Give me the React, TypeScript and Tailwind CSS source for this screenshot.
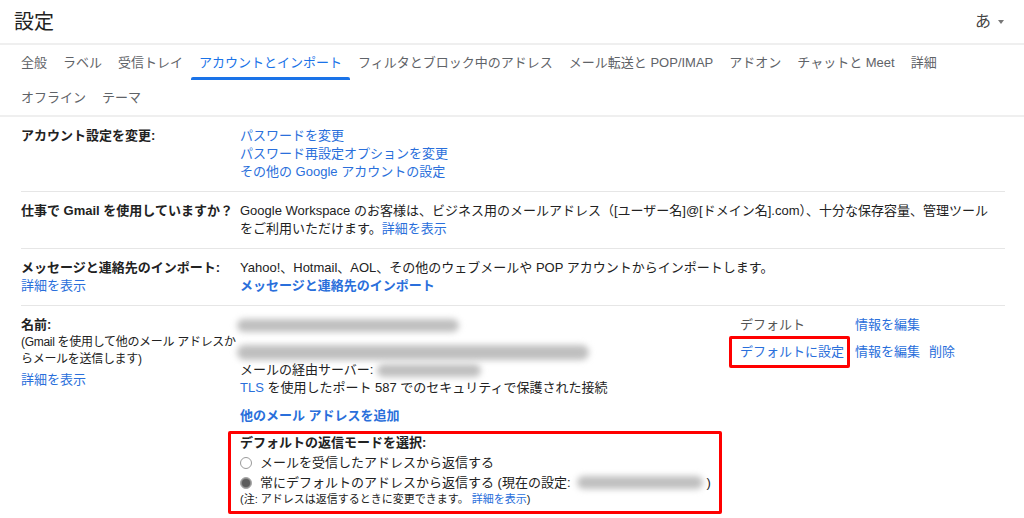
import React from "react";

const tabsTop = ["全般", "ラベル", "受信トレイ", "アカウントとインポート", "フィルタとブロック中のアドレス", "メール転送と POP/IMAP", "アドオン", "チャットと Meet", "詳細"];
const tabsBottom = ["オフライン", "テーマ"];

const Blur = ({ className }: { className: string }) => (
  <span className={`inline-block rounded-full bg-[#bfbfbf] blur-[3px] align-middle ${className}`} />
);

const Tab = ({ label, active }: { label: string; active?: boolean }) => (
  <div className="relative flex h-full items-center px-2">
    <span className={active ? "text-[#1a73e8]" : "text-[#5f6368]"}>{label}</span>
    {active && <span className="absolute bottom-0 left-0 right-0 h-[3px] rounded-t-[2px] bg-[#1a73e8]" />}
  </div>
);

const Link = ({ children, bold }: { children: React.ReactNode; bold?: boolean }) => (
  <a className={`cursor-pointer text-[#2a6fdb] ${bold ? "font-bold" : ""}`}>{children}</a>
);

const Row = ({ label, children }: { label: React.ReactNode; children: React.ReactNode }) => (
  <div className="flex border-b border-[#e6e6e6] py-[10px] leading-[18px]">
    <div className="w-[219px] shrink-0 whitespace-nowrap">{label}</div>
    <div className="flex-1">{children}</div>
  </div>
);

export default function App() {
  return (
    <div className="h-[518px] w-[1024px] overflow-hidden bg-white font-['Liberation_Sans','Noto_Sans_CJK_JP',sans-serif] text-[13px] text-[#222]">
      {/* header */}
      <div className="flex h-[43px] items-center justify-between pl-[14px] pr-[20px]">
        <h1 className="text-[20px] text-[#222]">設定</h1>
        <div className="flex items-center gap-[7px] text-[16px] text-[#444]">
          あ
          <svg width="6" height="4" viewBox="0 0 6 4">
            <path d="M0 0h6L3 4z" fill="#777" />
          </svg>
        </div>
      </div>
      <div className="h-[2px] bg-[#efefef]" />

      {/* tabs */}
      <div className="px-[13px]">
        <div className="flex h-[35px]">
          {tabsTop.map((t) => (
            <Tab key={t} label={t} active={t === "アカウントとインポート"} />
          ))}
        </div>
        <div className="flex h-[35px]">
          {tabsBottom.map((t) => (
            <Tab key={t} label={t} />
          ))}
        </div>
      </div>
      <div className="h-[2px] bg-[#efefef]" />

      {/* settings */}
      <div className="ml-[21px] mr-[19px]">
        <Row label={<span className="font-bold">アカウント設定を変更:</span>}>
          <div><Link>パスワードを変更</Link></div>
          <div><Link>パスワード再設定オプションを変更</Link></div>
          <div><Link>その他の Google アカウントの設定</Link></div>
        </Row>

        <Row label={<span className="font-bold">仕事で Gmail を使用していますか？</span>}>
          Google Workspace のお客様は、ビジネス用のメールアドレス（[ユーザー名]@[ドメイン名].com）、十分な保存容量、管理ツール
          <br />
          をご利用いただけます。<Link>詳細を表示</Link>
        </Row>

        <Row
          label={
            <>
              <div className="font-bold">メッセージと連絡先のインポート:</div>
              <Link>詳細を表示</Link>
            </>
          }
        >
          <div>Yahoo!、Hotmail、AOL、その他のウェブメールや POP アカウントからインポートします。</div>
          <Link bold>メッセージと連絡先のインポート</Link>
        </Row>

        {/* send mail as */}
        <div className="flex pt-[10px] leading-[18px]">
          <div className="w-[219px] shrink-0">
            <div className="font-bold">名前:</div>
            <div className="whitespace-nowrap text-[12px] leading-[17px] tracking-[-0.3px]">
              (Gmail を使用して他のメール アドレスか
              <br />
              らメールを送信します)
            </div>
            <div className="mt-[3px]">
              <Link>詳細を表示</Link>
            </div>
          </div>

          <div className="flex-1">
            <div className="flex h-[27px]">
              <div className="w-[500px] shrink-0">
                <Blur className="-ml-[3px] h-[13px] w-[222px]" />
              </div>
              <div className="w-[115px] shrink-0 text-[#555]">デフォルト</div>
              <div className="w-[74px] shrink-0">
                <Link>情報を編集</Link>
              </div>
            </div>

            <div className="flex">
              <div className="w-[500px] shrink-0">
                <div className="flex h-[18px] items-center">
                  <Blur className="-ml-[3px] h-[15px] w-[352px]" />
                </div>
                <div className="flex items-center">
                  メールの経由サーバー:
                  <Blur className="ml-[4px] h-[13px] w-[104px]" />
                </div>
                <div>
                  <Link>TLS</Link> を使用したポート 587 でのセキュリティで保護された接続
                </div>
              </div>
              <div className="w-[115px] shrink-0">
                <span className="relative inline-block">
                  <Link>デフォルトに設定</Link>
                  <span className="absolute -bottom-[7px] -left-[11px] -right-[6px] -top-[7px] rounded-[2px] border-[3px] border-[#ff0000]" />
                </span>
              </div>
              <div className="w-[74px] shrink-0">
                <Link>情報を編集</Link>
              </div>
              <div>
                <Link>削除</Link>
              </div>
            </div>

            <div className="mt-[10px]">
              <Link bold>他のメール アドレスを追加</Link>
            </div>

            <div className="-ml-[12px] mt-[6px] w-[494px] rounded-[2px] border-[3px] border-[#ff0000] pb-[4px] pl-[9px]">
              <div className="font-bold leading-[17px]">デフォルトの返信モードを選択:</div>
              <label className="mt-[2px] flex items-center gap-[8px] leading-[20px]">
                <span className="h-[12px] w-[12px] rounded-full border border-[#9a9a9a] bg-white" />
                メールを受信したアドレスから返信する
              </label>
              <label className="flex items-center gap-[8px] leading-[19px]">
                <span className="flex h-[12px] w-[12px] items-center justify-center rounded-full border border-[#a8a8a8] bg-[#8a8a8a]">
                  <span className="h-[8px] w-[8px] rounded-full bg-[#5c5c5c]" />
                </span>
                <span className="flex items-center">
                  常にデフォルトのアドレスから返信する (現在の設定:
                  <Blur className="ml-[6px] mr-[4px] h-[13px] w-[126px]" />)
                </span>
              </label>
              <div className="text-[11px] leading-[15px]">
                (注: アドレスは返信するときに変更できます。 <Link>詳細を表示</Link>)
              </div>
            </div>
          </div>
        </div>
      </div>
    </div>
  );
}
